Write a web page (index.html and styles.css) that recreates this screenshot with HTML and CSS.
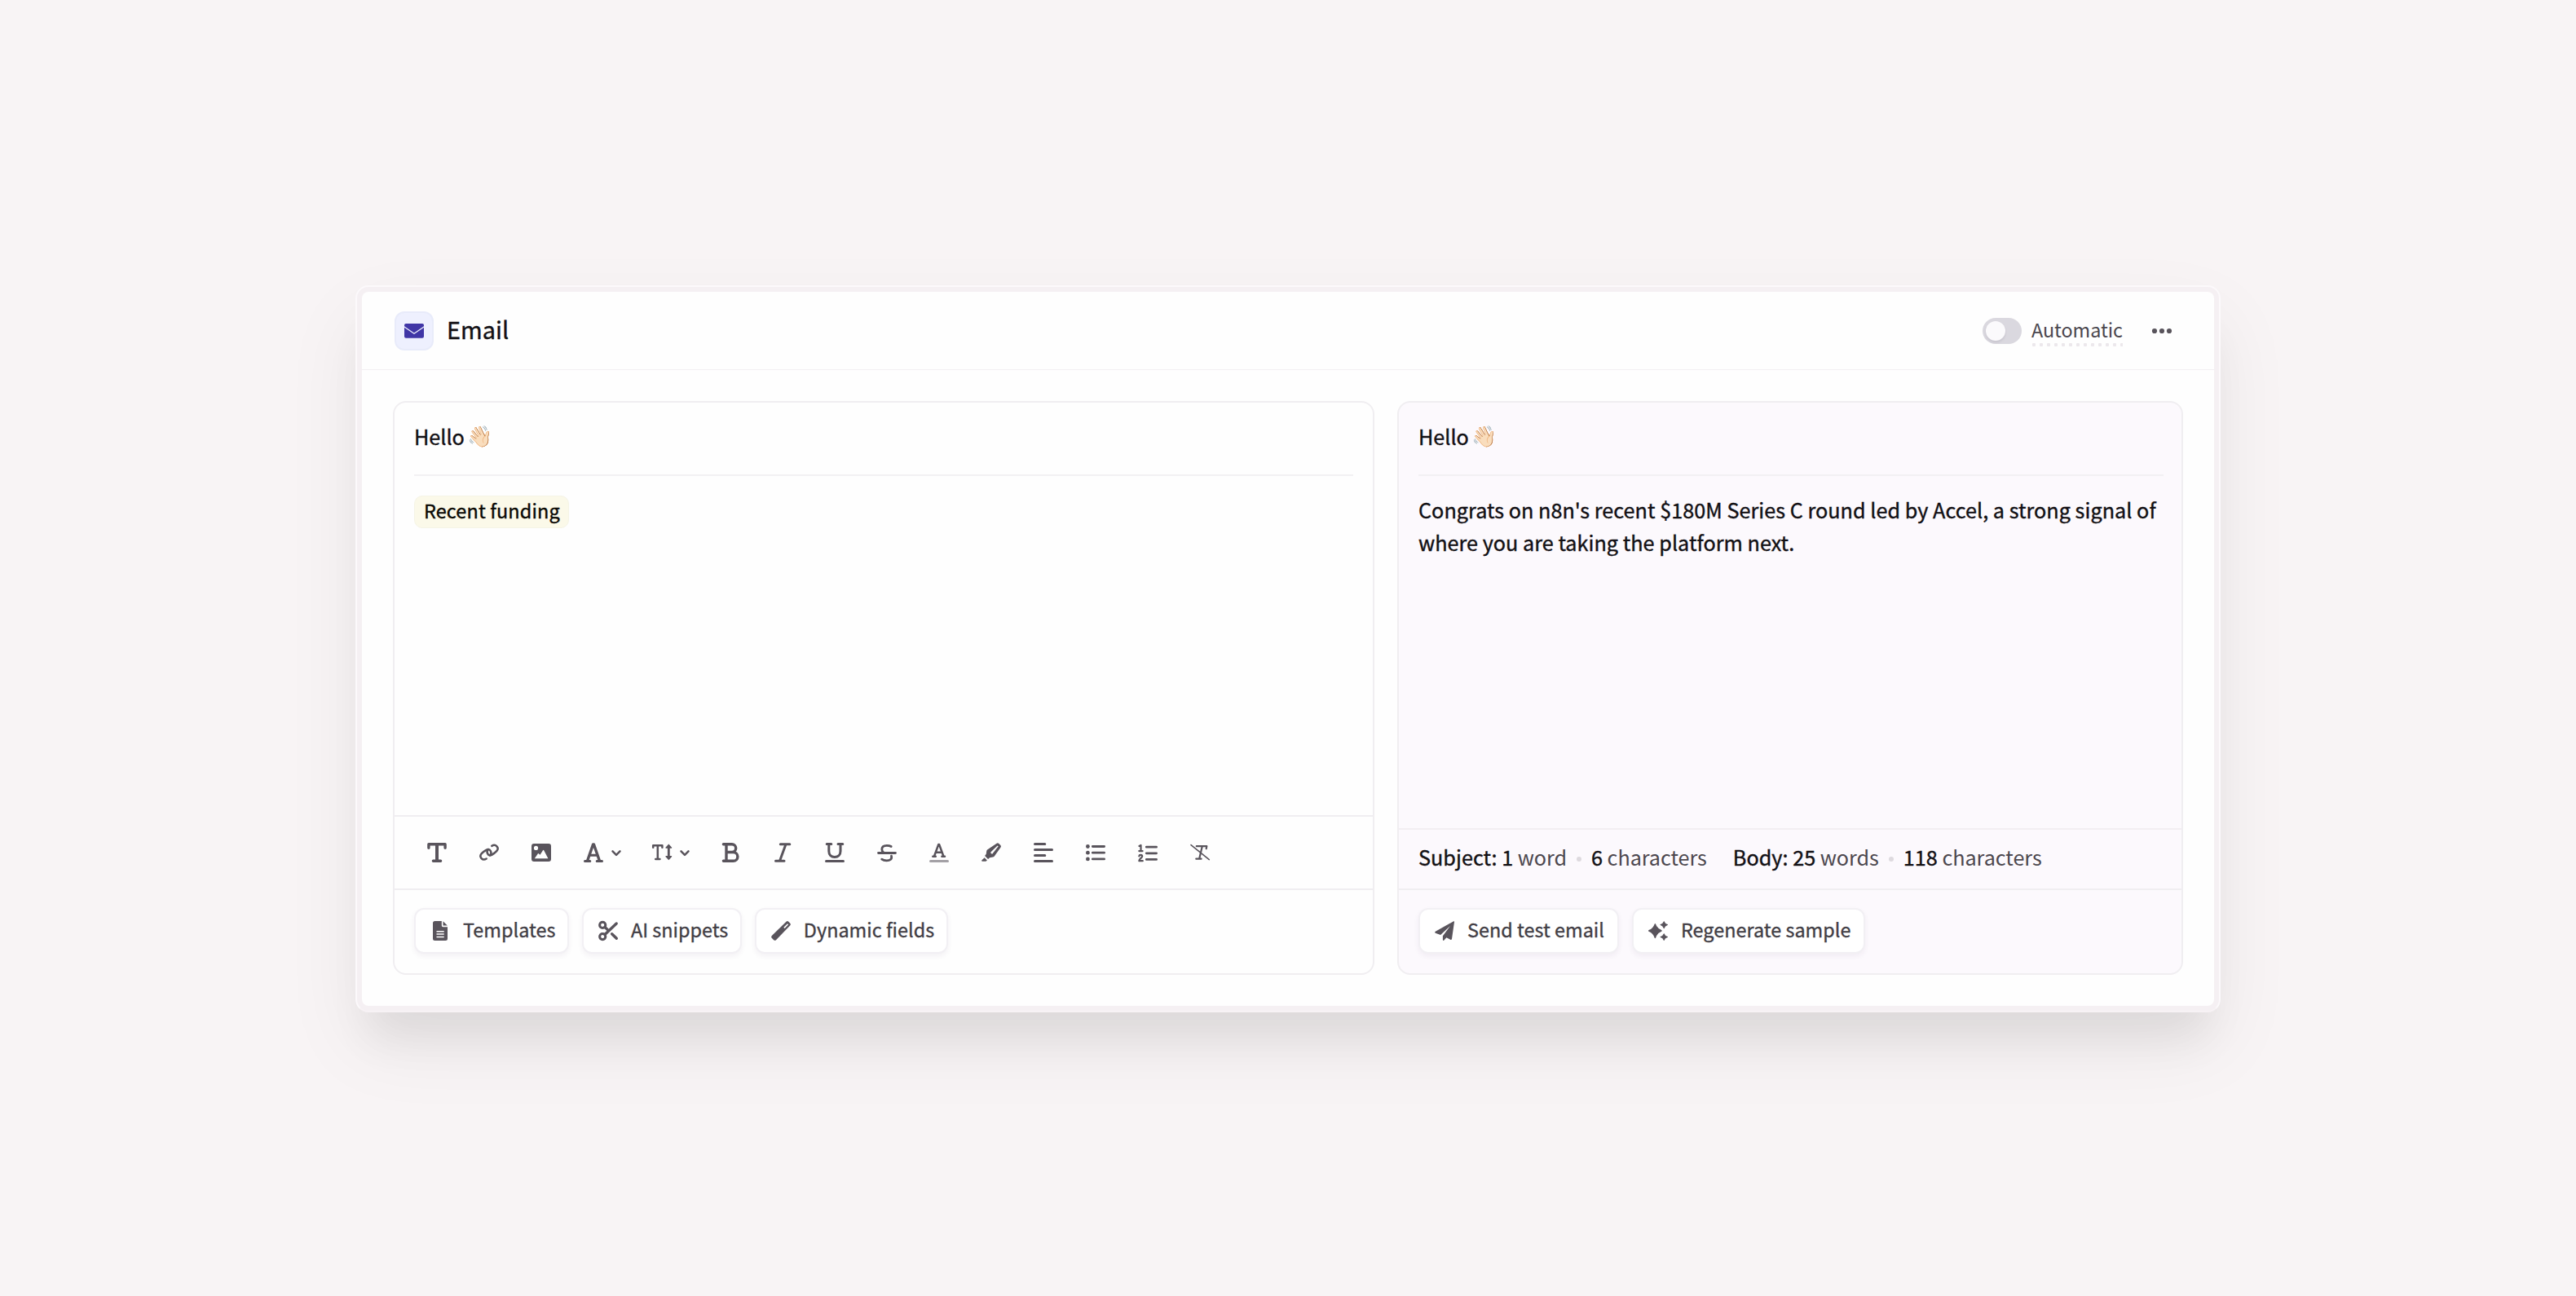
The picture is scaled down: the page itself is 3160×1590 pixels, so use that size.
FILE: index.html
```html
<!DOCTYPE html>
<html lang="en">
<head>
<meta charset="utf-8">
<title>Email</title>
<link rel="stylesheet" href="styles.css">
</head>
<body>
<main class="stage">
  <section class="frame">
    <div class="card">
      <header class="card-header">
        <span class="badge">
          <svg class="icon" viewBox="0 0 24 24"><path fill="#4036a6" d="M0 6.200V5a2 2 0 0 1 2-2h20a2 2 0 0 1 2 2v1.200L12 14.400z"/><path fill="#4036a6" d="M0 7.700v11a2 2 0 0 0 2 2h20a2 2 0 0 0 2-2v-11L12 16z"/></svg>
        </span>
        <h1 class="title">Email</h1>
        <span class="toggle"><span class="knob"></span></span>
        <span class="mode"><span class="mode-text">Automatic</span></span>
        <svg class="icon more" viewBox="0 0 24 24"><circle cx="3" cy="12" r="3.100"/><circle cx="12" cy="12" r="3.100"/><circle cx="21" cy="12" r="3.100"/></svg>
      </header>
      <div class="panels">
        <article class="panel editor">
          <div class="content">
            <p class="subject">Hello <span class="emoji">👋🏻</span></p>
            <div class="body"><span class="chip">Recent funding</span></div>
          </div>
          <div class="toolbar">
            <span class="tool"><svg class="icon" viewBox="0 0 24 24"><path class="s34" d="M1.900 6.300V1.800h20.200v4.500M7.400 22.200h9.200"/><path d="M10 1h4v21h-4z"/></svg></span>
            <span class="tool"><svg class="icon" viewBox="0 0 24 24"><path class="s25" d="M15.300 3.900C20 .8 25 6 21.200 10.200 19.500 12.100 17.500 13.500 15.200 14.800 10.500 17 7.800 11 11 8"/><path class="s25" d="M8.700 19.500C4 22.600-1 17.400 2.800 13.200 4.500 11.300 6.500 9.900 8.800 8.600 13.500 6.400 16.200 12.400 13 15.400"/></svg></span>
            <span class="tool"><svg class="icon" viewBox="0 0 24 24"><path fill-rule="evenodd" d="M3 1h18a3 3 0 0 1 3 3v16a3 3 0 0 1-3 3H3a3 3 0 0 1-3-3V4a3 3 0 0 1 3-3zM5.500 3.800a2.600 2.600 0 1 0 0 5.200 2.600 2.600 0 0 0 0-5.200zM3.800 19.200h16.600L15.200 9.300q-.6-.9-1.200 0l-3.500 5.400-1.700-1.500q-.5-.4-.9.100z"/></svg></span>
            <span class="tool dropdown"><svg class="icon" viewBox="0 0 24 24"><path class="s3" d="M1.500 22.400h6.300M16.200 22.400h6.300M7.200 15.300h9.600"/><path class="s34" d="M4.600 22L11.600 1.900h.8L19.400 22"/></svg><svg class="chev" viewBox="0 0 12 24"><path class="s25" d="M1.500 10.300L6 14.800l4.500-4.500"/></svg></span>
            <span class="tool dropdown"><svg class="icon" viewBox="0 0 24 24"><path class="s25" d="M1.200 5.700V3.300h11.200v2.400M6.800 3.300v16.600M4.200 19.900h5.200"/><path class="s28" d="M20.300 5v13"/><path d="M20.300 1.600l3.900 4.200q.2.900-.7.900h-6.400q-.9 0-.7-.9zM20.300 21.200l3.900-4.200q.2-.9-.7-.9h-6.400q-.9 0-.7.900z"/></svg><svg class="chev" viewBox="0 0 12 24"><path class="s25" d="M1.500 10.300L6 14.800l4.500-4.500"/></svg></span>
            <span class="tool"><svg class="icon" viewBox="0 0 24 24"><path class="s34" d="M3.400 1.700h10.400a4.900 4.900 0 0 1 0 9.800H7M13.800 11.500h1.700a5.400 5.400 0 0 1 0 10.800H3.400M7 1.700v20.600"/></svg></span>
            <span class="tool"><svg class="icon" viewBox="0 0 24 24"><path class="s3" d="M9.300 1.700h11.500M3.500 22.300h10.500M16 1.700L8.500 22.300"/></svg></span>
            <span class="tool"><svg class="icon" viewBox="0 0 24 24"><path class="s3" d="M2.200 1.600h5.600M16 1.600h5.800M4.800 1.600v8.600c0 4.700 3 7.200 7.100 7.200s7.100-2.500 7.100-7.200V1.600M1.500 22.500h21"/></svg></span>
            <span class="tool"><svg class="icon" viewBox="0 0 24 24"><path class="s28" d="M1.500 12.500h21M17.200 4.500C15.400 3.500 13.600 3.300 11.800 3.300c-4 0-6 1.900-6 4.600 0 1.900.9 3.200 2.400 4.200M17.500 16.200c.9 3.800-1.700 5.700-5.900 5.700-2.400 0-4.400-.6-5.900-1.700"/></svg></span>
            <span class="tool"><svg class="icon" viewBox="0 0 24 24"><path class="s25" d="M4.300 16.800h3.500M15.400 16.800H19M8 11.700h7.300M6 16.500L11.300 2h.8l5.300 14.500"/><path class="s3 faded" d="M1.500 22.500h21"/></svg></span>
            <span class="tool"><svg class="icon" viewBox="0 0 24 24"><path fill-rule="evenodd" d="M18.600.7q1.300-1.100 2.500.1l2.300 2.300q1.100 1.200.200 2.500l-7.800 10.800q-.7.900-1.800 1.100l-4 .8-1.200 1.200q-.7.500-1.300-.1l-2.900-2.900q-.6-.6-.1-1.300l1.200-1.200.5-3.600q.1-1 .9-1.800zM19.600 3.600L11.300 11.500q-.4 2 1.900 2.200l7.500-9.400z"/><path d="M3.700 18.300l3.200 3.200-1.500 1.300H1q-1.500-.3-.6-1.500z"/></svg></span>
            <span class="tool"><svg class="icon" viewBox="0 0 24 24"><path class="s3" d="M1.500 1.600h12.300M1.500 8.600h21M1.500 15.600h12.300M1.500 22.500h21"/></svg></span>
            <span class="tool"><svg class="icon" viewBox="0 0 24 24"><path class="s28" d="M8.300 4.500h14.300M8.300 12.200h14.300M8.300 19.900h14.300"/><circle cx="2.400" cy="4.500" r="2.400"/><circle cx="2.400" cy="12.200" r="2.400"/><circle cx="2.400" cy="19.900" r="2.400"/></svg></span>
            <span class="tool"><svg class="icon" viewBox="0 0 24 24"><path class="s28" d="M10.300 5.200h12.300M10.300 12.800h12.300M10.300 20.400h12.300"/><path class="s2" d="M1.500 4L3.500 3v7.100M1.300 10.100h4.300M1.300 16.400c.3-2.100 3.900-2 3.900.2 0 1.900-3.900 3-3.900 5.600h4.500"/></svg></span>
            <span class="tool"><svg class="icon" viewBox="0 0 24 24"><path class="s2" d="M7.800 4.200h12.500l-.6 3M14.800 4.200L11.200 19.500M7.300 19.700h6.300"/><path class="s15" d="M1 2.600l22.300 18"/></svg></span>
          </div>
          <footer class="actions">
            <button class="button"><svg class="icon" viewBox="0 0 24 24"><path fill-rule="evenodd" d="M5.500 0h8.300v5.600q0 1.600 1.600 1.600H21v14.300a2.500 2.500 0 0 1-2.500 2.500h-13A2.500 2.500 0 0 1 3 21.500v-19A2.500 2.500 0 0 1 5.500 0zM7.500 11.900v1.500h9.200v-1.500zM7.500 15.300v1.500h9.200v-1.500zM7.500 18.700v1.500h9.200v-1.500z"/><path d="M15.500.2L20.800 5.500h-5.300z"/></svg><span class="label">Templates</span></button>
            <button class="button"><svg class="icon" viewBox="0 0 24 24"><circle class="s3" cx="5.200" cy="4.900" r="3.600"/><circle class="s3" cx="5.200" cy="19.100" r="3.600"/><path class="s34" d="M8 16.600L22.200 3M8 7.500l3 2.700M16.600 15.700l5.700 5.600"/></svg><span class="label">AI snippets</span></button>
            <button class="button"><svg class="icon" viewBox="0 0 24 24"><path fill-rule="evenodd" d="M18.700.6q1.400-1.100 2.600.1l2 2q1.200 1.200.1 2.600L6 23.200q-1.400 1.300-2.800 0l-2.500-2.400q-1.300-1.400.1-2.800zM20 3.200l-4.700 4.500 1.300 1.300 4.500-4.700z"/></svg><span class="label">Dynamic fields</span></button>
          </footer>
        </article>
        <article class="panel preview">
          <div class="content">
            <p class="subject">Hello <span class="emoji">👋🏻</span></p>
            <p class="body">Congrats on n8n's recent $180M Series C round led by Accel, a strong signal of where you are taking the platform next.</p>
          </div>
          <div class="stats">
            <span class="stat"><b>Subject: 1</b> word</span><i class="dot"></i><span class="stat"><b>6</b> characters</span>
            <span class="stat next"><b>Body: 25</b> words</span><i class="dot"></i><span class="stat"><b>118</b> characters</span>
          </div>
          <footer class="actions">
            <button class="button"><svg class="icon" viewBox="0 0 24 24"><path d="M23.200.3L.9 12.800c-1 .6-.9 1.600 0 2l6.200 2.300L19 6 9.900 18.200V23c0 1 1 1.300 1.600.6l2.900-3.400 4.700 2.600c.9.500 1.700.1 1.900-.9L24 1c.1-.8-.3-1-.8-.7z"/></svg><span class="label">Send test email</span></button>
            <button class="button"><svg class="icon" viewBox="0 0 24 24"><path d="M7.600 3.700q.8-1.400 1.500 0 1.700 5.400 7 7.300 1.400.9 0 1.800-5.200 2-7 7.700-.7 1.400-1.500 0-1.800-5.700-7-7.700-1.200-.9 0-1.800 5.300-1.900 7-7.300zM18.800.5q.4-.8.800 0 .9 2.700 4 3.600.8.500 0 1-3.100.9-4 3.800-.4.800-.8 0-.9-2.900-3.900-3.800-.8-.5 0-1 3-.9 3.900-3.600zM18.800 15.400q.4-.8.800 0 .9 2.700 4 3.600.8.500 0 1-3.100.9-4 3.700-.4.700-.8 0-.9-2.800-3.900-3.700-.8-.5 0-1 3-.9 3.900-3.600z"/></svg><span class="label">Regenerate sample</span></button>
          </footer>
        </article>
      </div>
    </div>
  </section>
</main>
</body>
</html>
```
FILE: styles.css
```css
* { box-sizing: border-box; }
body {
  margin: 0;
  height: 1590px;
  background: #f8f4f5;
  color: #121014;
  font-family: "Noto Sans CJK SC", "Noto Sans", sans-serif;
  font-weight: 400;
}
h1, p { margin: 0; font-weight: 400; }
svg { display: block; overflow: visible; flex: none; fill: #59545c; }
.icon { width: 24px; height: 24px; }
.chev { width: 12px; height: 24px; }
.s3, .s34, .s28, .s25, .s2, .s15 {
  fill: none;
  stroke: #59545c;
  stroke-width: 3;
  stroke-linecap: round;
  stroke-linejoin: round;
}
.s34 { stroke-width: 3.400; }
.s28 { stroke-width: 2.800; }
.s25 { stroke-width: 2.500; }
.s2 { stroke-width: 2.200; }
.s15 { stroke-width: 1.600; }
.faded { opacity: .55; }

.stage { display: flex; justify-content: center; padding-top: 350px; }
.frame {
  width: 2288px;
  height: 892px;
  padding: 6px;
  border: 2px solid #fcf9fb;
  border-bottom-color: #f7f2f5;
  border-radius: 16px;
  background: #f5f0f3;
  box-shadow: 0 40px 96px rgba(0, 0, 0, .062), 0 48px 48px -16px rgba(0, 0, 0, .062);
}
.card {
  display: flex;
  flex-direction: column;
  height: 100%;
  border-radius: 8px;
  background: #fefefe;
}
.card-header {
  display: flex;
  align-items: center;
  height: 96px;
  padding: 0 52px 0 40px;
  border-bottom: 1px solid #f2f0f2;
}
.badge {
  display: flex;
  align-items: center;
  justify-content: center;
  width: 48px;
  height: 48px;
  border: 2px solid #e8ebfa;
  border-radius: 12px;
  background: #eef0fe;
}
.title { margin: 0 auto 0 16px; padding-bottom: 3px; font-size: 28.800px; line-height: 48px; letter-spacing: .05px; }
.title, .subject, .body, .stat b { -webkit-text-stroke: .4px currentColor; }
.toggle { display: flex; width: 48px; height: 32px; padding: 4px; border-radius: 16px; background: #dad8df; }
.knob { width: 24px; height: 24px; border-radius: 50%; background: #fbfafc; box-shadow: 0 2px 3px rgba(40, 30, 60, .1); }
.mode {
  width: 112px;
  height: 39px;
  margin: 0 36px 0 12px;
  background: radial-gradient(circle at 2px 2px, #ece8ec 2px, transparent 2.500px) 1px 100% / 9px 4px repeat-x;
  color: #4b474e;
  font-size: 23.400px;
  line-height: 37px;
  letter-spacing: -.08px;
  white-space: nowrap;
}

.panels { display: flex; flex: 1; gap: 28px; padding: 38px; }
.panel { display: flex; flex-direction: column; border: 2px solid #f0eef1; border-radius: 16px; }
.editor { width: 1204px; }
.preview { width: 964px; background: #fcf9fd; }
.content { flex: 1; padding: 0 24px; }
.subject { height: 90px; padding-top: 21px; border-bottom: 2px solid #f2f1f3; font-size: 25.200px; line-height: 40px; }
.emoji { margin-left: -2px; font-family: "Noto Color Emoji"; font-size: 25px; line-height: 1; vertical-align: 2px; }
.body { padding-top: 21px; font-size: 25.200px; line-height: 40px; letter-spacing: .03px; }
.chip {
  display: block;
  width: 190px;
  height: 40px;
  margin-top: 3px;
  padding-left: 11px;
  border: 1px solid #f5f4e6;
  border-radius: 10px;
  background: #fbf9e9;
  color: #0a0905;
  font-size: 23.400px;
  line-height: 34px;
  letter-spacing: .15px;
  white-space: nowrap;
}
.preview .content { padding-right: 22px; }

.toolbar { display: flex; align-items: center; gap: 16px; height: 90px; padding: 0 28px; border-top: 2px solid #f0eef1; }
.tool { display: flex; align-items: center; justify-content: center; width: 48px; height: 48px; }
.dropdown { gap: 10px; width: 68px; justify-content: flex-start; padding-left: 12px; }
.actions { display: flex; gap: 16px; height: 104px; padding: 22px 24px 0; border-top: 2px solid #f0eef1; }
.button {
  display: flex;
  align-items: center;
  gap: 16px;
  height: 56px;
  padding: 0 14.500px 0 18px;
  border: 2px solid #f2f0f4;
  border-radius: 12px;
  background: #fff;
  box-shadow: 0 3px 6px rgba(60, 40, 90, .06);
  color: #423e45;
  font: inherit;
  font-size: 23.400px;
  letter-spacing: .02px;
  white-space: nowrap;
  -webkit-text-stroke: .35px currentColor;
}
.preview .button { padding-right: 16px; }
.label { padding-bottom: 4px; line-height: 40px; }

.stats { display: flex; align-items: center; height: 74px; padding: 0 24px; border-top: 2px solid #f2eef2; color: #4d484f; font-size: 25.200px; white-space: nowrap; }
.stat { padding-bottom: 6px; line-height: 40px; letter-spacing: -.05px; }
.stat b { color: #121014; font-weight: 400; letter-spacing: .03px; }
.next { margin-left: 32px; }
.dot { width: 6px; height: 6px; margin: 0 12px; border-radius: 50%; background: #dedadf; }
```
